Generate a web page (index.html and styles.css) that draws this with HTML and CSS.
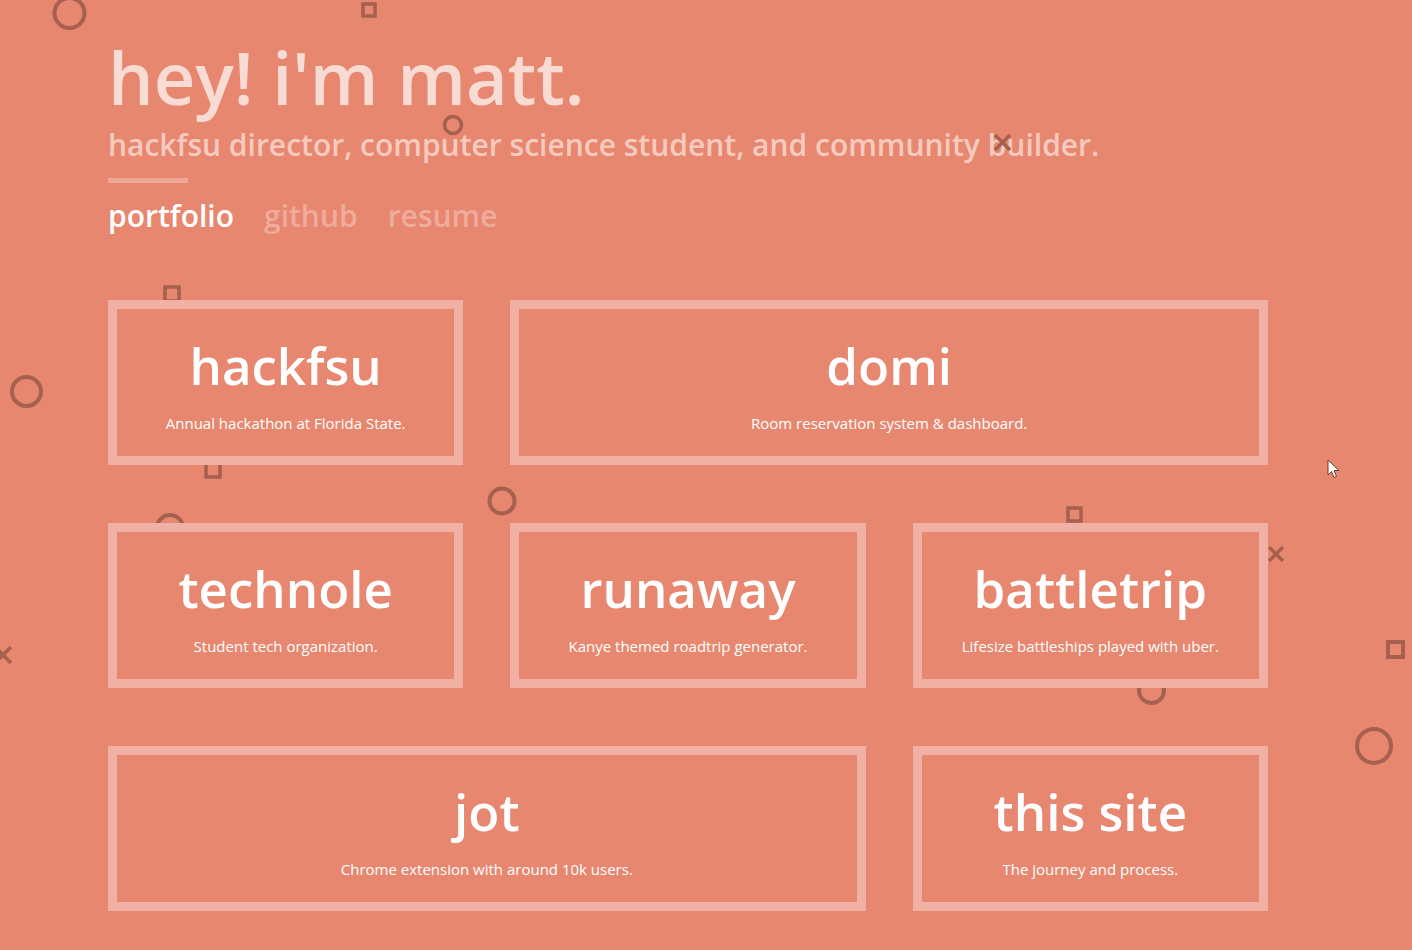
FILE: index.html
```html
<!DOCTYPE html>
<html lang="en">
<head>
<meta charset="utf-8">
<title>hey! i'm matt.</title>
<link rel="stylesheet" href="styles.css">
</head>
<body>
<div class="page">
  <header class="intro">
    <h1 class="title">hey! i'm matt.</h1>
    <p class="subtitle">hackfsu director, computer science student, and community builder.</p>
    <div class="rule"></div>
    <nav class="nav">
      <a class="nav-link active" href="#">portfolio</a>
      <a class="nav-link" href="#">github</a>
      <a class="nav-link" href="#">resume</a>
    </nav>
  </header>

  <svg class="shapes" width="1412" height="950" viewBox="0 0 1412 950" aria-hidden="true">
    <g fill="none" stroke="#a5604f" stroke-width="4">
      <circle cx="69.5" cy="13" r="15"/>
      <rect x="363" y="4" width="12" height="12" stroke-width="3.5"/>
      <circle cx="453" cy="125" r="8.5" stroke-width="3.5"/>
      <path d="M995 135 L1010 150 M1010 135 L995 150" stroke-width="3.5"/>
      <rect x="165" y="287" width="14" height="14" stroke-width="3.5"/>
      <circle cx="26.5" cy="391.5" r="14.5"/>
      <rect x="206" y="463" width="14" height="14" stroke-width="3.5"/>
      <circle cx="502" cy="501" r="12.5"/>
      <circle cx="170" cy="528" r="13"/>
      <rect x="1068" y="508" width="13" height="13" stroke-width="3.5"/>
      <path d="M1269 547 L1283 561 M1283 547 L1269 561" stroke-width="3.5"/>
      <path d="M-5 647 L11 663 M11 647 L-5 663" stroke-width="3.5"/>
      <rect x="1388" y="642" width="15" height="15"/>
      <circle cx="1151.5" cy="690.5" r="12.5"/>
      <circle cx="1374" cy="746" r="17"/>
    </g>
  </svg>

  <main class="grid">
    <a class="card" href="#"><h2 class="card-title">hackfsu</h2><p class="card-desc">Annual hackathon at Florida State.</p></a>
    <a class="card wide" href="#"><h2 class="card-title">domi</h2><p class="card-desc">Room reservation system &amp; dashboard.</p></a>
    <a class="card" href="#"><h2 class="card-title">technole</h2><p class="card-desc">Student tech organization.</p></a>
    <a class="card" href="#"><h2 class="card-title">runaway</h2><p class="card-desc">Kanye themed roadtrip generator.</p></a>
    <a class="card" href="#"><h2 class="card-title">battletrip</h2><p class="card-desc">Lifesize battleships played with uber.</p></a>
    <a class="card wide" href="#"><h2 class="card-title">jot</h2><p class="card-desc">Chrome extension with around 10k users.</p></a>
    <a class="card" href="#"><h2 class="card-title">this site</h2><p class="card-desc">The journey and process.</p></a>
  </main>

  <svg class="cursor" width="14" height="22" viewBox="0 0 14 22" aria-hidden="true">
    <path d="M1 1 L1 16 L4.5 12.5 L7 18.5 L9.5 17.5 L7 11.5 L12 11.5 Z" fill="#ffffff" stroke="#6b3a30" stroke-width="1" stroke-linejoin="round"/>
  </svg>
</div>
</body>
</html>
```

FILE: styles.css
```css
html, body {
  margin: 0;
  padding: 0;
}

body {
  background: #e8876f;
  font-family: "Open Sans", "Noto Sans", "Liberation Sans", sans-serif;
  width: 1412px;
  height: 950px;
  overflow: hidden;
}

.page {
  position: relative;
  width: 1412px;
  height: 950px;
  padding: 41px 0 0 108px;
  box-sizing: border-box;
}

.intro {
  display: flex;
  flex-direction: column;
  align-items: flex-start;
}

.title {
  margin: 0;
  font-size: 72px;
  line-height: 72px;
  font-weight: 600;
  color: #f8dcd4;
}

.subtitle {
  margin: 17px 0 0;
  font-size: 30px;
  line-height: 30px;
  font-weight: 600;
  color: #f6cbbf;
}

.rule {
  width: 80px;
  height: 5px;
  margin-top: 18px;
  background: #efa898;
}

.nav {
  display: flex;
  gap: 30px;
  margin-top: 18px;
}

.nav-link {
  font-size: 30px;
  line-height: 30px;
  font-weight: 600;
  color: #efab9c;
  text-decoration: none;
}

.nav-link.active {
  color: #ffffff;
}

.shapes {
  position: absolute;
  top: 0;
  left: 0;
  z-index: 1;
  pointer-events: none;
}

.grid {
  position: relative;
  z-index: 2;
  display: grid;
  width: 1160px;
  grid-template-columns: repeat(3, 1fr);
  grid-auto-rows: 165px;
  column-gap: 47px;
  row-gap: 58px;
  margin-top: 69px;
}

.card {
  box-sizing: border-box;
  border: 9px solid #f0b0a3;
  background: #e8876f;
  display: flex;
  flex-direction: column;
  align-items: center;
  padding-top: 31px;
  text-decoration: none;
  color: #ffffff;
}

.card.wide {
  grid-column: span 2;
}

.card-title {
  margin: 0;
  font-size: 51px;
  line-height: 51px;
  font-weight: 600;
  color: #ffffff;
}

.card-desc {
  margin: 25px 0 0;
  font-size: 15px;
  line-height: 15px;
  font-weight: 400;
  color: #ffffff;
}

.cursor {
  position: absolute;
  left: 1327px;
  top: 459px;
  z-index: 3;
}
```
